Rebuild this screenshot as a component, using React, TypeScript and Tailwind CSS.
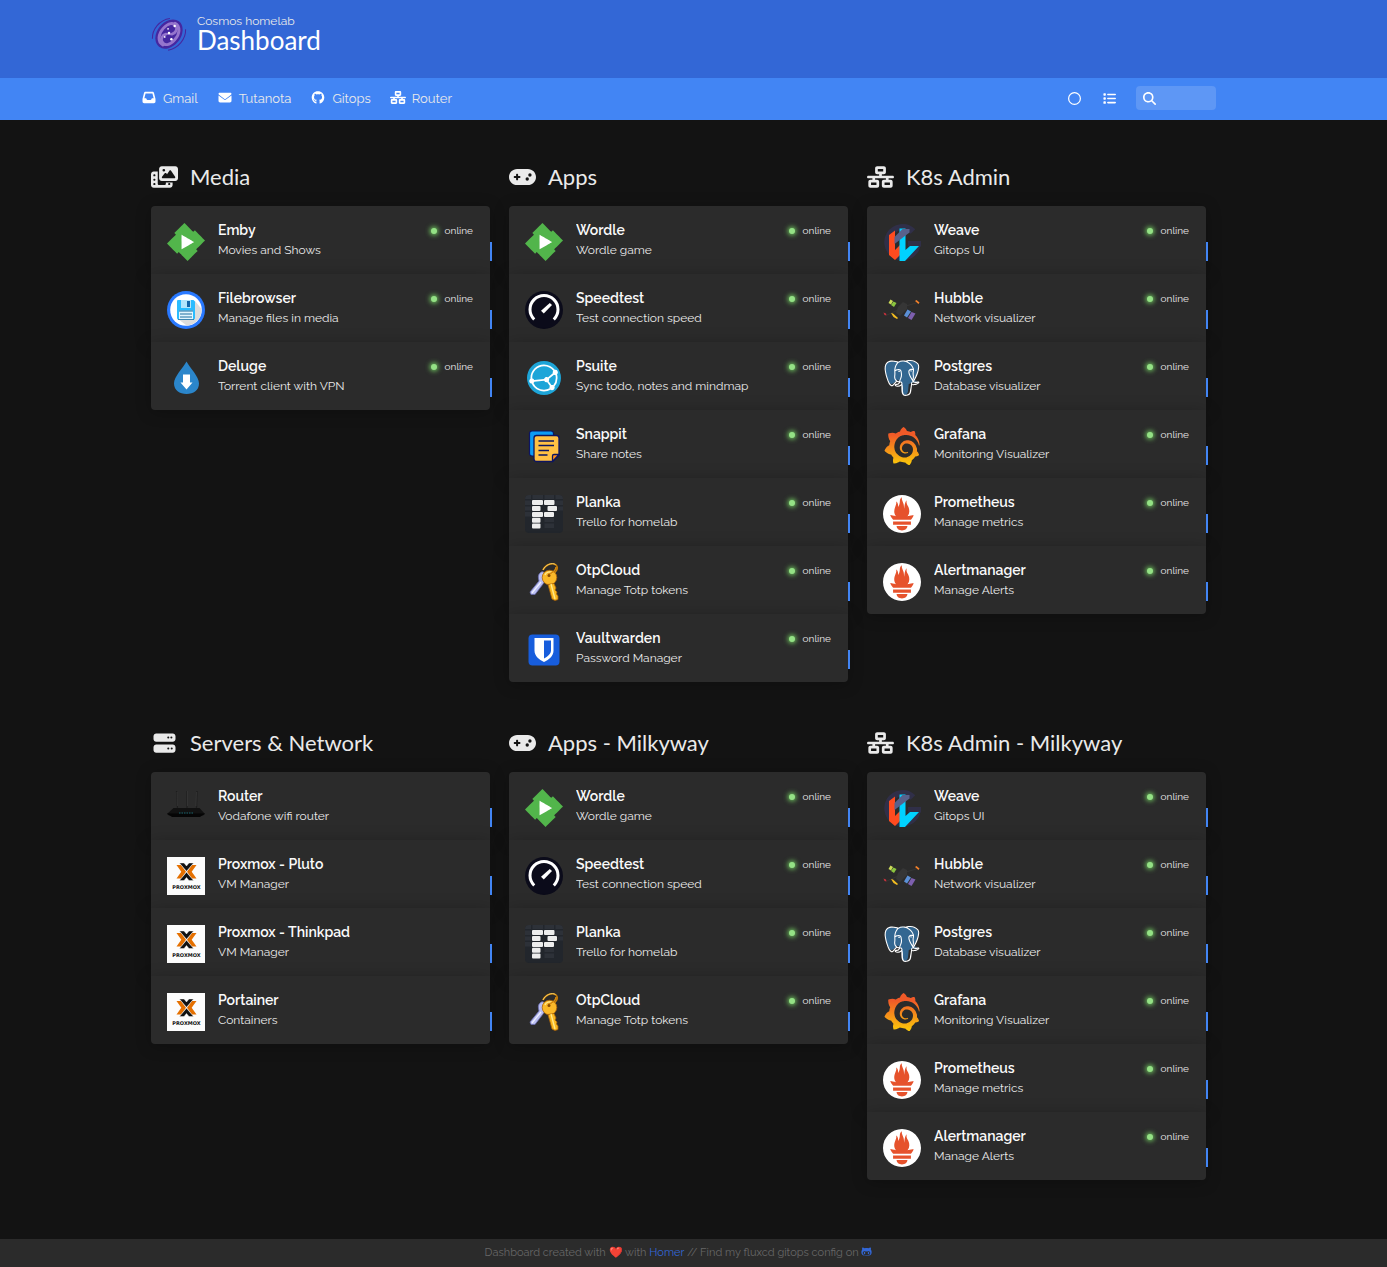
import type { ComponentType, ReactNode } from "react";
import { SiPostgresql, SiPrometheus, SiGrafana, SiSyncthing, SiEmby } from "react-icons/si";
import {
  FaEnvelope,
  FaGamepad,
  FaGithub,
  FaGithubAlt,
  FaInbox,
  FaList,
  FaMagnifyingGlass,
  FaNetworkWired,
  FaPhotoFilm,
  FaRegCircle,
  FaServer,
} from "react-icons/fa6";

type IconType = ComponentType<{ className?: string }>;

function Svg({ children, className = "size-full" }: { children: ReactNode; className?: string }) {
  return (
    <svg viewBox="0 0 38 38" className={className} aria-hidden="true">
      {children}
    </svg>
  );
}

function GalaxyLogo() {
  return (
    <Svg>
      <g transform="rotate(-52 19 18)">
        <ellipse cx="19" cy="18" rx="17" ry="12.500" fill="#4527a0" />
        <path
          d="M6 20C5 13 12 9 20 9.500C28 10 32 14 30 18.500C29 22 24 23 21 20.500"
          fill="none"
          stroke="#9575cd"
          strokeWidth="3"
          strokeLinecap="round"
        />
        <path
          d="M32 16C33 23 26 27 18 26.500C10 26 6 22 8 17.500C9 14 14 13 17 15.500"
          fill="none"
          stroke="#9575cd"
          strokeWidth="3"
          strokeLinecap="round"
        />
        <path d="M17 15.500C19 17 19 19 21 20.500" fill="none" stroke="#9575cd" strokeWidth="2" />
      </g>
      <path d="M1.500 23C1 13 9 3 20 1.500" fill="none" stroke="#4527a0" strokeWidth="1.100" />
      <path d="M36.500 13C37 23 29 33 18 35" fill="none" stroke="#4527a0" strokeWidth="1.100" />
      <circle cx="25" cy="9.500" r="1.300" fill="#fff" />
      <circle cx="18" cy="12.500" r="0.900" fill="#fff" />
      <circle cx="19" cy="17" r="1.300" fill="#fff" />
      <circle cx="14.500" cy="21" r="0.900" fill="#fff" />
      <circle cx="21.500" cy="23.500" r="1.300" fill="#fff" />
    </Svg>
  );
}

function Emby() {
  return (
    <div className="grid size-full place-items-center">
      <span className="col-start-1 row-start-1 size-[18px] bg-white" />
      <SiEmby className="col-start-1 row-start-1 size-full text-[#52b54b]" />
    </div>
  );
}

function Filebrowser() {
  return (
    <Svg>
      <circle cx="19" cy="19" r="19" fill="#2979ff" />
      <circle cx="19" cy="19" r="15.800" fill="#fff" />
      <path d="M28 10L34.500 18A15.800 15.800 0 0 1 20 34.700L11 28Z" fill="#dcdcdc" />
      <path d="M11 9H26.500L28 10.500V27A1.500 1.500 0 0 1 26.500 28.500H11.500A1.500 1.500 0 0 1 10 27V10A1 1 0 0 1 11 9Z" fill="#2bbcff" />
      <rect x="14" y="9" width="10" height="8" fill="#b3e5fc" />
      <rect x="20" y="10" width="3" height="6" fill="#1565a8" />
      <rect x="12" y="19.500" width="14" height="9" fill="#e1f5fe" />
      <path d="M12 20H26M13 23H25M13 26H25" stroke="#1f6fa0" strokeWidth="1" />
      <path d="M11 28.500H27" stroke="#1f6fa0" strokeWidth="0.800" />
    </Svg>
  );
}

function Deluge() {
  return (
    <Svg>
      <path d="M19.500 2.500C23 9 32 17.500 32 24.500C32 31 26.500 35 19.500 35S7 31 7 24.500C7 17.500 16 9 19.500 2.500Z" fill="#2b86cb" />
      <path d="M16 15.500H23V23.500H25.500L19.500 30.500L13.500 23.500H16Z" fill="#fff" />
    </Svg>
  );
}

function Speedtest() {
  return (
    <Svg>
      <circle cx="19" cy="19" r="19" fill="#0b0b1a" />
      <path d="M9.200 28.500A14 14 0 1 1 28.800 28.500" fill="none" stroke="#fff" strokeWidth="3" />
      <path d="M24.800 12L27 14L18.800 22.500L16 19.700Z" fill="#fff" />
    </Svg>
  );
}

function Syncthing() {
  return (
    <div className="grid size-full place-items-center">
      <span className="col-start-1 row-start-1 size-8 rounded-full bg-white" />
      <SiSyncthing className="col-start-1 row-start-1 size-[34px] text-[#1da5d8]" />
    </div>
  );
}

function Snappit() {
  return (
    <Svg>
      <rect x="4.500" y="4" width="24" height="25" rx="2.500" fill="#0c9bf5" stroke="#0d1460" strokeWidth="1.200" />
      <path
        d="M11.500 8.500H31.500A2.500 2.500 0 0 1 34 11V28L27.500 34.500H11.500A2.500 2.500 0 0 1 9 32V11A2.500 2.500 0 0 1 11.500 8.500Z"
        fill="#ffc043"
        stroke="#0d1460"
        strokeWidth="1.300"
      />
      <path d="M34 27.500H29A1.500 1.500 0 0 0 27.500 29V34.500Z" fill="#ff8f1c" stroke="#0d1460" strokeWidth="1.300" strokeLinejoin="round" />
      <path d="M13.500 14H29M13.500 18.500H29M13.500 23.500H24M13.500 28H22.500" stroke="#0d1460" strokeWidth="1.400" />
    </Svg>
  );
}

function Planka() {
  return (
    <Svg>
      <rect width="38" height="38" rx="4" fill="#22262c" />
      <g fill="#2d3138">
        <path d="M0 4A4 4 0 0 1 4 0H6V4H0ZM7.500 0H18V4H7.500ZM19.500 0H29V4H19.500ZM30.500 0H34A4 4 0 0 1 38 4H30.500Z" />
        <path d="M0 5.500H6V10H0ZM30.500 5.500H38V10H30.500ZM0 11.500H6V15.500H0ZM33 11.500H38V15.500H33ZM0 17H6V21.500H0Z" />
        <path d="M19.500 23H29V27H19.500ZM19.500 28.500H29V33H19.500Z" />
      </g>
      <g fill="#ededed">
        <rect x="7" y="5" width="11" height="5" rx="1" />
        <rect x="19" y="5" width="10.500" height="5" rx="1" />
        <rect x="7" y="11" width="8.500" height="5" rx="1" />
        <rect x="22.500" y="11" width="9.500" height="5" rx="1" />
        <rect x="7" y="17" width="11" height="5" rx="1" />
        <rect x="19" y="17" width="10" height="5" rx="1" />
        <rect x="7" y="22.800" width="8.500" height="5" rx="1" />
        <rect x="7" y="28.500" width="8.500" height="5" rx="1" />
      </g>
    </Svg>
  );
}

function Keys() {
  return (
    <Svg>
      <path d="M15 10C17 7.500 21 9 21 15C20 19 18.500 20 18 21L10 31.500H6L5 29L14 18C13 14 13 12 15 10Z" fill="#b9bdf0" stroke="#6a6cae" strokeWidth="0.800" />
      <path d="M16 19L7 30" stroke="#eef0ff" strokeWidth="1.200" />
      <path d="M18 7C20 2 27 -1 31 2C34 5 31 10 26 12C24 13 22 13 22 11" fill="none" stroke="#c77e08" strokeWidth="1.600" />
      <path d="M18 7C20 2 27 -1 30.500 1.500" fill="none" stroke="#ffe07a" strokeWidth="0.800" />
      <circle cx="24.500" cy="14.500" r="7.300" fill="#fbb929" stroke="#a96208" strokeWidth="0.800" />
      <path d="M23 21.500L29 20.500L31 25L30 27L32 29L31.500 31L33 33V36.500L30 37.500L27 36Z" fill="#f9b71f" stroke="#a96208" strokeWidth="0.800" />
      <path d="M26 21L30 36M20 12C21 9 25 8 28 10" fill="none" stroke="#ffe98a" strokeWidth="1.400" />
      <path d="M31 4C31 8 27 10 23 11.500" fill="none" stroke="#d88a0c" strokeWidth="1.500" />
      <circle cx="24" cy="12.500" r="1.500" fill="#8a4c05" />
    </Svg>
  );
}

function Bitwarden() {
  return (
    <Svg>
      <rect x="3.500" y="3.500" width="31" height="31" rx="4" fill="#175ddc" />
      <path d="M9.500 7H28.500V19.500C28.500 25 24 28.500 19 31C14 28.500 9.500 25 9.500 19.500Z" fill="#fff" />
      <path d="M19 9.500H26V19.500C26 23 22.500 25.500 19 27.500Z" fill="#175ddc" />
    </Svg>
  );
}

function Weave() {
  return (
    <Svg>
      <path d="M30 8.500A15 15 0 1 0 34.500 20.500" fill="none" stroke="#302f48" strokeWidth="6.500" />
      <path d="M25 18H38V23.500H25Z" fill="#302f48" />
      <path d="M6 12L12 7.500V27L17 22V32L12 37L6 32Z" fill="#ff4b1f" />
      <path d="M16.500 5.500H22.500V27L27 23H36L22 38H16.500Z" fill="#00d2ff" />
      <path d="M11.500 14L19.500 6H26.500V9.500L11.500 21Z" fill="#58618c" />
    </Svg>
  );
}

function Hubble() {
  return (
    <Svg>
      <path d="M4 24L15 19M23 15L33 12" stroke="#3a3a3a" strokeWidth="0.700" />
      <path d="M13 22L15 16L20 11L24 13L24 18L17 25Z" fill="#363636" />
      <path d="M7.500 8.500L10 10L8 13.500L5.500 12Z" fill="#cddc59" />
      <path d="M10.500 10.500L13.500 12L11 16L8 14Z" fill="#8bc53f" />
      <path d="M32 10L33.500 9L36.500 11.500L35.500 13Z" fill="#f4812a" />
      <path d="M0.500 21.500L3 22.500L3.500 24.500L1.500 24Z" fill="#c8323c" />
      <path d="M8 22L10 22.500L15 27L14 28L10.500 26Z" fill="#f3bd21" />
      <path d="M24.500 18.500L28 20.500L24 26.500L21 24.500Z" fill="#5b8fd6" />
      <path d="M28.500 21L32.500 22.500L28.500 29L25 27Z" fill="#7d5fae" />
    </Svg>
  );
}

function Postgres() {
  return (
    <div className="grid size-full place-items-center">
      <svg viewBox="0 0 24 24" className="col-start-1 row-start-1 size-9" aria-hidden="true">
        <path
          d="M4.500 1C1.500 1.300 0.500 3.500 0.700 6.500C1 10 3 15.500 5 16C7 15.500 8 14 9 13L11.500 15L12 22C13 24 15.500 23.500 16 21L16.500 16L22.500 14L19.500 13.500C22 10 23.500 5 22.500 3C21 0.500 18 0.300 15.500 1C12 0.200 10 0.600 9 1.500C7.500 1 6 0.900 4.500 1Z"
          fill="#336791"
        />
      </svg>
      <SiPostgresql className="col-start-1 row-start-1 size-9 text-white" />
    </div>
  );
}

function Grafana() {
  return (
    <div className="size-full">
      <svg width="0" height="0" className="block" aria-hidden="true">
        <defs>
          <linearGradient id="grafana" x1="0" y1="0" x2="0" y2="1">
            <stop offset="0.200" stopColor="#f05a28" />
            <stop offset="1" stopColor="#fbca0a" />
          </linearGradient>
        </defs>
      </svg>
      <SiGrafana className="size-full [fill:url(#grafana)]" />
    </div>
  );
}

function Prometheus() {
  return (
    <div className="grid size-full place-items-center">
      <span className="col-start-1 row-start-1 size-9 rounded-full bg-[#e6522c]" />
      <SiPrometheus className="col-start-1 row-start-1 size-full text-white" />
    </div>
  );
}

function RouterDevice() {
  return (
    <Svg>
      <path d="M9.500 2L10.500 20M20 2V20M30 2L29.500 20" stroke="#1d1d1d" strokeWidth="1.200" />
      <path d="M20.500 2V17M29.500 3L29 17M10 3L10.500 17" stroke="#444" strokeWidth="0.500" />
      <path d="M6.500 19H32.500L38 25L36 26.500H2L0 25Z" fill="#111" />
      <path d="M0 24.500H38L33 28H5Z" fill="#050505" />
      <path d="M12 24H27" stroke="#1b6f7a" strokeWidth="0.900" strokeDasharray="1.500 1" />
    </Svg>
  );
}

function Proxmox() {
  return (
    <Svg>
      <rect width="38" height="38" fill="#fcfcfc" />
      <path
        d="M9.500 8H14L19 14.800L14 21.500H9.500L14.300 14.800ZM29.500 8H25L20 14.800L25 21.500H29.500L24.700 14.800Z"
        fill="#e57000"
      />
      <path
        d="M12.500 6H17L19.500 9L22 6H26.500L19.500 14.300ZM12.500 23.500H17L19.500 20.500L22 23.500H26.500L19.500 15.300Z"
        fill="#111"
        stroke="#fcfcfc"
        strokeWidth="0.400"
      />
      <text x="19.500" y="31.500" textAnchor="middle" fontFamily="DejaVu Sans, sans-serif" fontWeight="700" fontSize="5" fill="#111">
        PROXMOX
      </text>
    </Svg>
  );
}

type Service = { name: string; subtitle: string; logo: ComponentType; online?: boolean };
type Group = { name: string; icon: IconType; items: Service[] };

const wordle: Service = { name: "Wordle", subtitle: "Wordle game", logo: Emby, online: true };
const speedtest: Service = { name: "Speedtest", subtitle: "Test connection speed", logo: Speedtest, online: true };
const planka: Service = { name: "Planka", subtitle: "Trello for homelab", logo: Planka, online: true };
const otpCloud: Service = { name: "OtpCloud", subtitle: "Manage Totp tokens", logo: Keys, online: true };

const k8s: Service[] = [
  { name: "Weave", subtitle: "Gitops UI", logo: Weave, online: true },
  { name: "Hubble", subtitle: "Network visualizer", logo: Hubble, online: true },
  { name: "Postgres", subtitle: "Database visualizer", logo: Postgres, online: true },
  { name: "Grafana", subtitle: "Monitoring Visualizer", logo: Grafana, online: true },
  { name: "Prometheus", subtitle: "Manage metrics", logo: Prometheus, online: true },
  { name: "Alertmanager", subtitle: "Manage Alerts", logo: Prometheus, online: true },
];

const groups: Group[] = [
  {
    name: "Media",
    icon: FaPhotoFilm,
    items: [
      { name: "Emby", subtitle: "Movies and Shows", logo: Emby, online: true },
      { name: "Filebrowser", subtitle: "Manage files in media", logo: Filebrowser, online: true },
      { name: "Deluge", subtitle: "Torrent client with VPN", logo: Deluge, online: true },
    ],
  },
  {
    name: "Apps",
    icon: FaGamepad,
    items: [
      wordle,
      speedtest,
      { name: "Psuite", subtitle: "Sync todo, notes and mindmap", logo: Syncthing, online: true },
      { name: "Snappit", subtitle: "Share notes", logo: Snappit, online: true },
      planka,
      otpCloud,
      { name: "Vaultwarden", subtitle: "Password Manager", logo: Bitwarden, online: true },
    ],
  },
  { name: "K8s Admin", icon: FaNetworkWired, items: k8s },
  {
    name: "Servers & Network",
    icon: FaServer,
    items: [
      { name: "Router", subtitle: "Vodafone wifi router", logo: RouterDevice },
      { name: "Proxmox - Pluto", subtitle: "VM Manager", logo: Proxmox },
      { name: "Proxmox - Thinkpad", subtitle: "VM Manager", logo: Proxmox },
      { name: "Portainer", subtitle: "Containers", logo: Proxmox },
    ],
  },
  { name: "Apps - Milkyway", icon: FaGamepad, items: [wordle, speedtest, planka, otpCloud] },
  { name: "K8s Admin - Milkyway", icon: FaNetworkWired, items: k8s },
];

const links: { label: string; icon: IconType }[] = [
  { label: "Gmail", icon: FaInbox },
  { label: "Tutanota", icon: FaEnvelope },
  { label: "Gitops", icon: FaGithub },
  { label: "Router", icon: FaNetworkWired },
];

function ServiceRow({ service }: { service: Service }) {
  const Logo = service.logo;
  return (
    <li className="relative bg-[#2b2b2b] shadow-[0_2px_15px_0_rgba(0,0,0,0.25)] first:rounded-t last:rounded-b">
      <a href="#" className="flex h-[68px] items-start pr-[17px] pl-4">
        <span className="mt-[17px] block size-[38px] shrink-0">
          <Logo />
        </span>
        <span className="mt-[15px] ml-[13px] min-w-0 flex-1">
          <span className="block truncate text-[14px] leading-[19px] font-semibold text-[#fafafa]">{service.name}</span>
          <span className="block truncate text-[12px] leading-[20px] text-[#eaeaea]">{service.subtitle}</span>
        </span>
        {service.online && (
          <span className="mt-[17px] flex items-center gap-2 text-[10px] leading-[16px] text-[#eaeaea]">
            <span className="size-1.5 rounded-full bg-[#94e185] shadow-[0_0_5px_1px_#78d965]" />
            online
          </span>
        )}
      </a>
      <span className="absolute top-9 -right-0.5 h-[19px] w-0.5 bg-[#4285f4]" />
    </li>
  );
}

export default function App() {
  return (
    <div className="flex min-h-screen flex-col bg-[#131313] font-['Raleway',sans-serif] text-[#eaeaea]">
      <header>
        <div className="bg-[#3367d6] pr-[30px]">
          <div className="mx-auto flex h-[78px] w-full max-w-[1075px] items-start px-[10px] pt-[14px]">
            <span className="mt-[3px] block size-9">
              <GalaxyLogo />
            </span>
            <div className="ml-[10px]">
              <p className="text-[12px] leading-[14px]">Cosmos homelab</p>
              <h1 className="font-['Lato',sans-serif] text-[26px] leading-[24px] text-white">Dashboard</h1>
            </div>
          </div>
        </div>
        <div className="bg-[#4285f4] pr-[30px]">
          <nav className="mx-auto flex h-[42px] w-full max-w-[1075px] items-start pt-2 text-[13px]" aria-label="Main">
            <ul className="flex gap-[19px] pt-[3px]">
              {links.map(({ label, icon: Icon }) => (
                <li key={label}>
                  <a href="#" className="flex items-start gap-[6px] leading-[20px]">
                    <Icon className="mt-[2px] h-[13px] w-4 text-white" />
                    {label}
                  </a>
                </li>
              ))}
            </ul>
            <div className="ml-auto flex items-center text-white">
              <button type="button" aria-label="Toggle theme" className="mr-[22px]">
                <FaRegCircle className="size-[13px]" />
              </button>
              <button type="button" aria-label="Toggle layout" className="mr-[20px]">
                <FaList className="size-[13px]" />
              </button>
              <label className="flex h-6 w-20 items-center rounded bg-white/15 pr-1 pl-[7px]">
                <FaMagnifyingGlass className="size-[13px] shrink-0" />
                <input type="text" aria-label="Search" className="w-full min-w-0 bg-transparent pl-1 outline-none" />
              </label>
            </div>
          </nav>
        </div>
      </header>

      <main className="flex-1 pr-[30px] pb-[59px]">
        <div className="mx-auto grid w-full max-w-[1075px] grid-cols-3 gap-x-[19px] gap-y-[45px] px-[10px] pt-[41px]">
          {groups.map(({ name, icon: Icon, items }) => (
            <section key={name}>
              <h2 className="mb-[13px] flex items-center gap-3 font-['Lato',sans-serif] text-[22px] leading-[32px]">
                <Icon className="h-[22px] w-[27px]" />
                {name}
              </h2>
              <ul>
                {items.map((service) => (
                  <ServiceRow key={service.name} service={service} />
                ))}
              </ul>
            </section>
          ))}
        </div>
      </main>

      <footer className="bg-[#2b2b2b] pr-[30px] text-[#676767]">
        <p className="py-1 text-center text-[11px] leading-[20px]">
          Dashboard created with ❤️ with{" "}
          <a href="#" className="text-[#3367d6]">
            Homer
          </a>{" "}
          // Find my fluxcd gitops config on{" "}
          <a href="#" aria-label="GitHub" className="inline-block align-[-1px] text-[#3367d6]">
            <FaGithubAlt className="size-[11px]" />
          </a>
        </p>
      </footer>
    </div>
  );
}
